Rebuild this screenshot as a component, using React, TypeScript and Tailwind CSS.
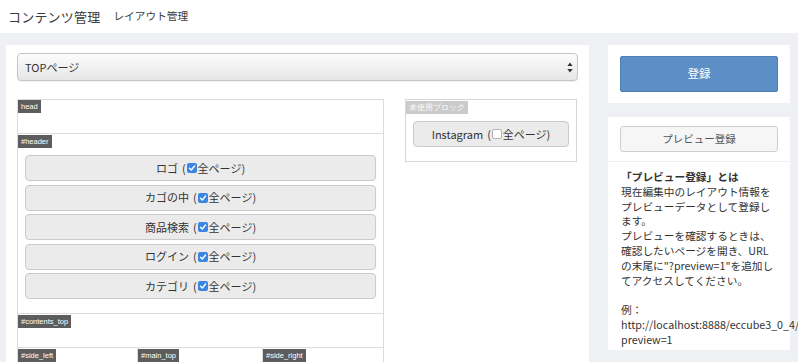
import React from "react";

const Checked = () => (
  <span className="inline-flex w-[10px] h-[10px] rounded-[2px] bg-[#3a86e3] items-center justify-center mx-[1px]">
    <svg width="8" height="8" viewBox="0 0 8 8">
      <path d="M1.5 4.2 L3.3 6 L6.6 2" stroke="#fff" strokeWidth="1.4" fill="none" strokeLinecap="round" strokeLinejoin="round" />
    </svg>
  </span>
);

const Unchecked = () => (
  <span className="inline-block w-[10px] h-[10px] rounded-[2px] bg-white border border-[#b5b5b5] mx-[1px]" />
);

const Label = ({ children, light }: { children: React.ReactNode; light?: boolean }) => (
  <div
    className={
      "self-start h-[13px] leading-[13px] px-[3px] text-[7.5px] text-white font-['Liberation_Sans',sans-serif] " +
      (light ? "bg-[#cbcbcb]" : "bg-[#5d5d5d]")
    }
  >
    {children}
  </div>
);

const Block = ({ name, checked = true }: { name: string; checked?: boolean }) => (
  <div className="h-[26px] border border-[#cacaca] rounded-[4px] bg-[#ebebeb] flex items-center justify-center text-[11px] text-[#333]">
    <span>{name}</span>
    <span className="ml-[4px]">(</span>
    {checked ? <Checked /> : <Unchecked />}
    <span>全ページ)</span>
  </div>
);

export default function App() {
  const lines = [
    "現在編集中のレイアウト情報を",
    "プレビューデータとして登録し",
    "ます。",
    "プレビューを確認するときは、",
    "確認したいページを開き、URL",
    "の末尾に\"?preview=1\"を追加し",
    "てアクセスしてください。",
    "\u00a0",
    "例：",
    "http://localhost:8888/eccube3_0_4/",
    "preview=1",
  ];
  return (
    <div className="w-[798px] h-[362px] overflow-hidden bg-[#eff0f3] font-['Noto_Sans_CJK_JP',sans-serif] text-[#333]">
      <header className="h-[33px] bg-white flex items-center pl-[8px]">
        <span className="text-[13px] tracking-[0.2px] text-[#3a3a3a]">コンテンツ管理</span>
        <span className="text-[10.7px] ml-[13px] text-[#3a3a3a]">レイアウト管理</span>
      </header>
      <div className="flex pt-[12px] pl-[6px]">
        <div className="w-[583px] h-[400px] bg-white pt-[8px] px-[11px]">
          <div className="h-[28px] rounded-[4px] border border-[#c6c6c6] bg-gradient-to-b from-[#fcfcfc] to-[#e6e6e6] flex items-center justify-between pl-[7px] pr-[4px] text-[11px] text-[#333] shadow-[0_1px_1px_rgba(0,0,0,0.06)]">
            <span>TOPページ</span>
            <svg width="6" height="11" viewBox="0 0 6 11">
              <path d="M3 0.5 L5.6 4 L0.4 4 Z" fill="#333" />
              <path d="M3 10.5 L5.6 7 L0.4 7 Z" fill="#333" />
            </svg>
          </div>
          <div className="flex mt-[18px] gap-[21px] items-start">
            <div className="w-[367px] border border-[#dcdcdc] flex flex-col">
              <div className="h-[33px] flex flex-col">
                <Label>head</Label>
              </div>
              <div className="border-t border-[#dcdcdc] flex flex-col pt-[1px] pb-[14px]">
                <Label>#header</Label>
                <div className="flex flex-col gap-[3.5px] px-[7px] mt-[7px]">
                  <Block name="ロゴ" />
                  <Block name="カゴの中" />
                  <Block name="商品検索" />
                  <Block name="ログイン" />
                  <Block name="カテゴリ" />
                </div>
              </div>
              <div className="h-[34px] border-t border-[#dcdcdc] flex flex-col pt-[1px]">
                <Label>#contents_top</Label>
              </div>
              <div className="h-[60px] border-t border-[#dcdcdc] flex">
                <div className="w-[120px] flex flex-col pt-[1px] border-r border-[#dcdcdc]">
                  <Label>#side_left</Label>
                </div>
                <div className="w-[125px] flex flex-col pt-[1px] border-r border-[#dcdcdc]">
                  <Label>#main_top</Label>
                </div>
                <div className="flex-1 flex flex-col pt-[1px]">
                  <Label>#side_right</Label>
                </div>
              </div>
            </div>
            <div className="w-[172px] border border-[#d6d6d6] flex flex-col pt-[1px] pb-[14px]">
              <Label light>未使用ブロック</Label>
              <div className="px-[7px] mt-[7px]">
                <Block name="Instagram" checked={false} />
              </div>
            </div>
          </div>
        </div>
        <div className="w-[182px] ml-[19px] flex flex-col gap-[14px]">
          <div className="bg-white px-[12px] py-[11px]">
            <div className="h-[36px] bg-[#5b8fc6] border border-[#4d7fb5] rounded-[2px] flex items-center justify-center text-white text-[11.5px]">
              登録
            </div>
          </div>
          <div className="bg-white">
            <div className="px-[12px] pt-[9px] pb-[9px]">
              <div className="h-[26px] bg-[#f6f6f6] border border-[#cfcfcf] rounded-[3px] flex items-center justify-center text-[10.5px] text-[#555]">
                プレビュー登録
              </div>
            </div>
            <div className="border-t border-[#f0f0f0] pl-[13px] pt-[8px] pb-[2px] text-[10.7px] leading-[14.8px] text-[#333]">
              <div className="font-bold whitespace-nowrap">「プレビュー登録」とは</div>
              {lines.map((l, i) => (
                <div key={i} className="whitespace-nowrap">
                  {l}
                </div>
              ))}
            </div>
          </div>
        </div>
      </div>
    </div>
  );
}
